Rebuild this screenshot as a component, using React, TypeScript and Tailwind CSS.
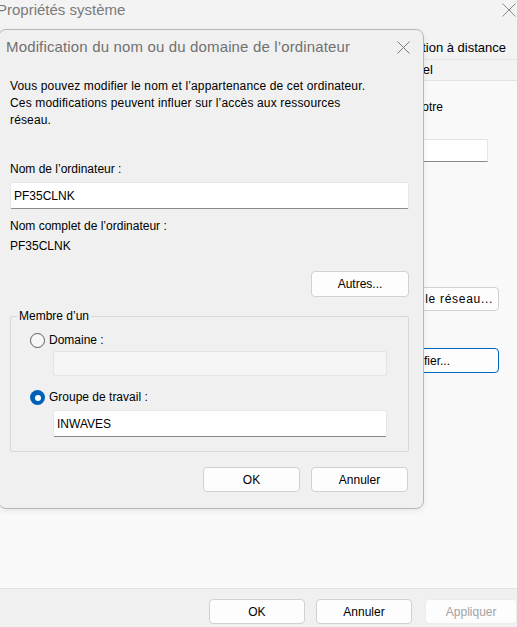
import React from 'react';

const CloseGlyph = ({ size, color }: { size: number; color: string }) => (
  <svg width={size} height={size} viewBox={`0 0 ${size} ${size}`} fill="none">
    <path d={`M0.5 0.5 L${size - 0.5} ${size - 0.5} M${size - 0.5} 0.5 L0.5 ${size - 0.5}`} stroke={color} strokeWidth={1} />
  </svg>
);

const Button = ({
  label,
  className = '',
  disabled = false,
}: {
  label: string;
  className?: string;
  disabled?: boolean;
}) => (
  <button
    type="button"
    className={`flex h-[25px] items-center justify-center rounded-[4px] border bg-[#fdfdfd] text-[12px] ${
      disabled ? 'border-[#ececec] bg-[#f7f7f7] text-[#a3a3a3]' : 'border-[#d1d1d1] text-black'
    } ${className}`}
  >
    {label}
  </button>
);

const TextBox = ({ value, className = '' }: { value: string; className?: string }) => (
  <div
    className={`flex h-[27px] items-center rounded-[2px] border border-[#e6e6e6] border-b-[#8a8a8a] bg-white pl-[3px] text-[12px] ${className}`}
  >
    {value}
  </div>
);

const Radio = ({ checked, label }: { checked: boolean; label: string }) => (
  <div className="flex h-[17px] items-center gap-[4px] leading-[17px]">
    {checked ? (
      <span className="flex h-[15px] w-[15px] items-center justify-center rounded-full bg-[#005fb8]">
        <span className="h-[6px] w-[6px] rounded-full bg-white" />
      </span>
    ) : (
      <span className="h-[15px] w-[15px] rounded-full border border-[#5c5c5c] bg-[#f6f6f6]" />
    )}
    <span>{label}</span>
  </div>
);

const RenameDialog = () => (
  <div className="absolute left-[-2px] top-[29px] flex h-[480px] w-[426px] flex-col rounded-[8px] border border-[#b7b7b7] bg-[#f0f0f0] shadow-[0_2px_6px_rgba(0,0,0,0.08)]">
    <div className="flex h-[35px] shrink-0 items-center justify-between pl-[7px] pr-[13px]">
      <span className="text-[15px] tracking-[0.15px] text-[#707070]">
        Modification du nom ou du domaine de l’ordinateur
      </span>
      <CloseGlyph size={13} color="#7a7a7a" />
    </div>

    <div className="flex flex-col pl-[11px] pr-[14px]">
      <p className="mt-[13px] leading-[17px] tracking-[0.15px]">
        Vous pouvez modifier le nom et l’appartenance de cet ordinateur.
        <br />
        Ces modifications peuvent influer sur l’accès aux ressources
        <br />
        réseau.
      </p>

      <div className="mt-[32px] leading-[17px]">Nom de l’ordinateur :</div>
      <TextBox value="PF35CLNK" className="mt-[4px]" />

      <div className="mt-[7px] leading-[20px]">Nom complet de l’ordinateur :</div>
      <div className="leading-[20px]">PF35CLNK</div>

      <Button label="Autres..." className="mt-[15px] h-[26px] w-[98px] self-end" />

      <fieldset className="mt-[11px] rounded-[2px] border border-[#d8d8d8] pb-[14px]">
        <legend className="ml-[6px] px-[2px] leading-[17px]">Membre d’un</legend>
        <div className="flex flex-col pl-[19px] pr-[21px]">
          <div className="mt-[7px]">
            <Radio checked={false} label="Domaine :" />
          </div>
          <div className="ml-[23px] mt-[2px] h-[25px] rounded-[2px] border border-[#e4e4e4] bg-[#f5f5f5]" />
          <div className="mt-[13px]">
            <Radio checked label="Groupe de travail :" />
          </div>
          <TextBox value="INWAVES" className="ml-[23px] mt-[4px]" />
        </div>
      </fieldset>

      <div className="mt-[15px] flex justify-end gap-[11px] pr-[1px]">
        <Button label="OK" className="w-[97px]" />
        <Button label="Annuler" className="w-[97px]" />
      </div>
    </div>
  </div>
);

export default function App() {
  return (
    <div className="relative flex h-[627px] w-[517px] flex-col overflow-hidden bg-[#f9f9f9] font-['Liberation_Sans',Arial,sans-serif] text-[12px] text-black">
      {/* background window: Propriétés système */}
      <div className="flex h-[36px] shrink-0 items-start justify-between bg-[#f3f3f3]">
        <span className="-ml-[3px] text-[15px] leading-[20px] text-[#7a7a7a]">Propriétés système</span>
        <div className="mr-[1px] mt-[3px]">
          <CloseGlyph size={14} color="#8a8a8a" />
        </div>
      </div>
      <div className="flex h-[24px] shrink-0 items-center justify-end border-b border-[#e3e3e3] bg-[#f3f3f3] pr-[11px] text-[13px]">
        Utilisation à distance
      </div>
      <div className="flex h-[21px] shrink-0 items-center justify-end border-b border-[#e3e3e3] bg-[#f3f3f3] pr-[84px] text-[13px]">
        Matériel
      </div>

      <div className="flex flex-1 flex-col items-end">
        <div className="mr-[74px] mt-[18px] leading-[17px]">de votre</div>
        <div className="mr-[29px] mt-[23px] h-[23px] w-[200px] border border-[#e6e6e6] border-b-[#8a8a8a] bg-white" />
        <button
          type="button"
          className="mr-[18px] mt-[125px] flex h-[24px] w-[200px] items-center justify-end rounded-[4px] border border-[#d1d1d1] bg-[#fdfdfd] pr-[5px] tracking-[0.7px]"
        >
          Identité sur le réseau...
        </button>
        <button
          type="button"
          className="mr-[18px] mt-[37px] flex h-[25px] w-[150px] items-center justify-end rounded-[4px] border border-[#0067c0] bg-[#fdfdfd] pr-[48px]"
        >
          Modifier...
        </button>
      </div>

      <div className="flex h-[39px] shrink-0 gap-[11px] border-t border-[#e3e3e3] bg-[#f0f0f0] pl-[209px] pt-[10px]">
        <Button label="OK" className="w-[96px]" />
        <Button label="Annuler" className="w-[97px]" />
        <Button label="Appliquer" disabled className="ml-[2px] w-[92px]" />
      </div>

      <RenameDialog />
    </div>
  );
}
